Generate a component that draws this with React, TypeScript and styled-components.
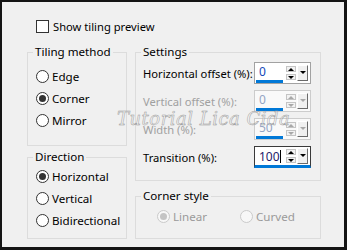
import styled, { createGlobalStyle } from "styled-components";

const GlobalStyle = createGlobalStyle`
    html, body {
        margin: 0;
        padding: 0;
        background: #f0f0f0;
    }

    body {
        font-family: "Noto Sans", "Liberation Sans", sans-serif;
        font-size: 11.2px;
        color: #000;
    }
`

const Dialog = styled.div`
    position: relative;
    width: 347px;
    height: 250px;
    box-sizing: border-box;
    border-style: solid;
    border-color: #141414;
    border-width: 2px 3px 3px 2px;
    background: #f0f0f0;
    padding: 18px 0 0 25px;
`

const PreviewRow = styled.label`
    display: flex;
    align-items: center;
    gap: 4px;
    height: 13px;
    margin-left: 9px;
`

const CheckBox = styled.span`
    width: 13px;
    height: 13px;
    box-sizing: border-box;
    border: 1px solid #333;
    background: #fff;
`

const Columns = styled.div`
    display: flex;
    gap: 8px;
    margin-top: 12px;
`

const Column = styled.div<{ $w: number; $gap: number }>`
    display: flex;
    flex-direction: column;
    width: ${p => p.$w}px;
    gap: ${p => p.$gap}px;
`

const Group = styled.fieldset<{ $h: number }>`
    margin: 0;
    padding: 0;
    min-width: 0;
    height: ${p => p.$h}px;
    box-sizing: border-box;
    border: 1px solid #dcdcdc;
`

const Legend = styled.legend`
    margin-left: 5px;
    padding: 0 2px;
    line-height: 14px;
    font-size: 11.6px;
`

const RadioList = styled.div<{ $top: number }>`
    display: flex;
    flex-direction: column;
    padding: ${p => p.$top}px 0 0 8px;
`

const RadioRow = styled.label<{ $disabled?: boolean; $w?: number }>`
    display: flex;
    align-items: center;
    gap: 3px;
    height: 22px;
    width: ${p => (p.$w ? `${p.$w}px` : "auto")};
    font-size: 11.6px;
    color: ${p => (p.$disabled ? "#9a9a9a" : "#000")};
`

const RadioDot = styled.span<{ $checked?: boolean; $disabled?: boolean }>`
    position: relative;
    width: 13px;
    height: 13px;
    box-sizing: border-box;
    border-radius: 50%;
    border: 1px solid ${p => (p.$disabled ? "#cacaca" : "#333")};
    background: ${p => (p.$disabled ? "#f7f7f7" : "#fff")};

    &::after {
        content: "";
        display: ${p => (p.$checked ? "block" : "none")};
        position: absolute;
        left: 2px;
        top: 2px;
        width: 7px;
        height: 7px;
        border-radius: 50%;
        background: ${p => (p.$disabled ? "#c4c4c4" : "#333")};
    }
`

const InlineRadios = styled.div`
    display: flex;
    align-items: center;
    height: 26px;
    padding-left: 21px;
`

const Settings = styled.div`
    display: flex;
    flex-direction: column;
`

const SettingRow = styled.div<{ $disabled?: boolean }>`
    display: grid;
    grid-template-columns: 1fr 57px;
    align-items: center;
    height: 28px;
    padding: 0 9px 0 7px;
    white-space: nowrap;
    color: ${p => (p.$disabled ? "#a0a0a0" : "#000")};
`

const Spin = styled.div<{ $disabled?: boolean; $focused?: boolean }>`
    display: flex;
    align-items: center;
    height: 22px;
    box-sizing: border-box;
    border: 1px solid ${p => (p.$focused ? "#3a3a3a" : p.$disabled ? "#cccccc" : "#a2a2a2")};
    border-bottom: ${p => (p.$focused ? "3px solid #0078d7" : "")};
    background: ${p => (p.$disabled ? "#f9f9f9" : "#fff")};
`

const Edit = styled.div<{ $disabled?: boolean; $focused?: boolean }>`
    display: flex;
    align-items: center;
    width: 27px;
    height: 100%;
    margin-left: 1px;
    padding-left: 3px;
    box-sizing: border-box;
    font-size: 12px;
    border-bottom: ${p => (p.$focused ? "none" : "3px solid #0078d7")};
    color: ${p => (p.$disabled ? "#93a4c4" : p.$focused ? "#1e1a6a" : "#1448b8")};
`

const Caret = styled.span`
    width: 1px;
    height: 13px;
    background: #000;
`

const Steppers = styled.div`
    display: flex;
    flex-direction: column;
    gap: 2px;
    margin-left: 3px;
`

const StepButton = styled.span<{ $down?: boolean; $disabled?: boolean }>`
    display: flex;
    align-items: center;
    justify-content: center;
    width: 10px;
    height: 6px;
    box-sizing: border-box;
    border: 1px solid #c4c4c4;
    background: #f2f2f2;

    &::before {
        content: "";
        border-left: 3px solid transparent;
        border-right: 3px solid transparent;
        border-${p => (p.$down ? "top" : "bottom")}: 3px solid ${p => (p.$disabled ? "#a8a8a8" : "#000")};
    }
`

const DropButton = styled.span<{ $disabled?: boolean }>`
    display: flex;
    align-items: flex-start;
    justify-content: center;
    width: 11px;
    height: 16px;
    margin-left: 1px;
    padding-top: 5px;
    box-sizing: border-box;
    background: #f0f0f0;
    border-style: solid;
    border-width: 1px;
    border-color: #fff #6a6a6a #6a6a6a #fff;

    &::before {
        content: "";
        border-left: 3px solid transparent;
        border-right: 3px solid transparent;
        border-top: 3px solid ${p => (p.$disabled ? "#a8a8a8" : "#000")};
    }
`

const Watermark = styled.span`
    position: absolute;
    left: 115px;
    top: 106px;
    font-family: "DejaVu Serif", "Liberation Serif", serif;
    font-style: italic;
    font-size: 18px;
    letter-spacing: 0.5px;
    color: rgba(255, 255, 255, 0.45);
    -webkit-text-stroke: 0.5px #999;
    pointer-events: none;
    white-space: nowrap;
`

type SpinProps = { value: string; disabled?: boolean; focused?: boolean };

function SpinField({ value, disabled, focused }: SpinProps) {
    return (
        <Spin $disabled={disabled} $focused={focused}>
            <Edit $disabled={disabled} $focused={focused}>
                {value}
                {focused && <Caret />}
            </Edit>
            <Steppers>
                <StepButton $disabled={disabled} />
                <StepButton $down $disabled={disabled} />
            </Steppers>
            <DropButton $disabled={disabled} />
        </Spin>
    );
}

const settings = [
    { label: "Horizontal offset (%):", value: "0" },
    { label: "Vertical offset (%):", value: "0", disabled: true },
    { label: "Width (%):", value: "50", disabled: true },
    { label: "Transition (%):", value: "100", focused: true },
];

function App() {
    return (
        <>
            <GlobalStyle />
            <Dialog>
                <PreviewRow>
                    <CheckBox />
                    Show tiling preview
                </PreviewRow>
                <Columns>
                    <Column $w={100} $gap={4}>
                        <Group $h={101}>
                            <Legend>Tiling method</Legend>
                            <RadioList $top={6}>
                                <RadioRow><RadioDot />Edge</RadioRow>
                                <RadioRow><RadioDot $checked />Corner</RadioRow>
                                <RadioRow><RadioDot />Mirror</RadioRow>
                            </RadioList>
                        </Group>
                        <Group $h={89}>
                            <Legend>Direction</Legend>
                            <RadioList $top={1}>
                                <RadioRow><RadioDot $checked />Horizontal</RadioRow>
                                <RadioRow><RadioDot />Vertical</RadioRow>
                                <RadioRow><RadioDot />Bidirectional</RadioRow>
                            </RadioList>
                        </Group>
                    </Column>
                    <Column $w={186} $gap={8}>
                        <Group $h={136}>
                            <Legend>Settings</Legend>
                            <Settings>
                                {settings.map(s => (
                                    <SettingRow key={s.label} $disabled={s.disabled}>
                                        {s.label}
                                        <SpinField value={s.value} disabled={s.disabled} focused={s.focused} />
                                    </SettingRow>
                                ))}
                            </Settings>
                        </Group>
                        <Group $h={50}>
                            <Legend>Corner style</Legend>
                            <InlineRadios>
                                <RadioRow $disabled $w={83}><RadioDot $checked $disabled />Linear</RadioRow>
                                <RadioRow $disabled><RadioDot $disabled />Curved</RadioRow>
                            </InlineRadios>
                        </Group>
                    </Column>
                </Columns>
                <Watermark>Tutorial Lica Cida</Watermark>
            </Dialog>
        </>
    );
}

export default App;
